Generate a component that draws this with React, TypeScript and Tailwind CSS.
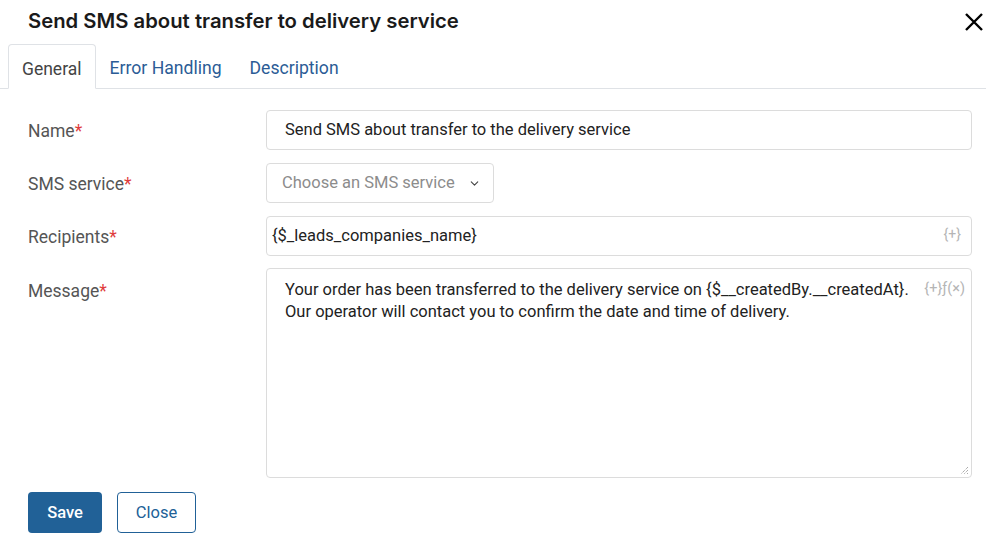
import { ChevronDown } from 'lucide-react';

const font = { fontFamily: 'Roboto, "Liberation Sans", sans-serif' };

function Label({ text }: { text: string }) {
  return (
    <div className="w-[238px] shrink-0 text-[17.5px] text-[#555]">
      {text}
      <span className="text-[#e03c3c]">*</span>
    </div>
  );
}

export default function App() {
  return (
    <div className="w-[986px] h-[539px] bg-white overflow-hidden text-[#222]" style={font}>
      <div className="flex items-center justify-between pl-[28px] pr-[2px] h-[42px]">
        <h1 className="text-[20.3px] font-semibold text-[#1a1a1a]" style={{ fontFamily: 'Inter, sans-serif' }}>
          Send SMS about transfer to delivery service
        </h1>
        <svg width="20" height="20" viewBox="0 0 20 20" className="mt-[1px]">
          <path d="M2 2 L18 18 M18 2 L2 18" stroke="#000" strokeWidth="2.4" />
        </svg>
      </div>

      <div className="flex border-b border-[#dfe2e6] pl-[8px] h-[47px] items-end">
        <div className="h-[45px] px-[13px] pt-[5px] flex items-center border border-[#dfe2e6] border-b-white -mb-px rounded-t-[4px] bg-white text-[17.5px] text-[#444]">
          General
        </div>
        <div className="h-[45px] pl-[14px] pr-[14px] pt-[5px] flex items-center text-[17.6px] text-[#2b5c96]">Error Handling</div>
        <div className="h-[45px] px-[14px] pt-[5px] flex items-center text-[17.6px] text-[#2b5c96]">Description</div>
      </div>

      <div className="pl-[28px] pr-[14px] pt-[21px] flex flex-col gap-[13px]">
        <div className="flex">
          <div className="pt-[8px]"><Label text="Name" /></div>
          <div className="flex-1 h-[40px] border border-[#dcdcdc] rounded-[4px] flex items-center pl-[18px] text-[16.5px]">
            Send SMS about transfer to the delivery service
          </div>
        </div>

        <div className="flex">
          <div className="pt-[8px]"><Label text="SMS service" /></div>
          <div className="w-[228px] h-[40px] border border-[#dcdcdc] rounded-[4px] flex items-center pl-[15px] gap-[13px] text-[16.5px] text-[#8c8c8c]">
            Choose an SMS service
            <ChevronDown size={13} strokeWidth={2} className="text-[#444]" />
          </div>
        </div>

        <div className="flex">
          <div className="pt-[8px]"><Label text="Recipients" /></div>
          <div className="flex-1 h-[40px] border border-[#dcdcdc] rounded-[4px] flex items-center justify-between pl-[5px] pr-[10px] text-[16.5px]">
            <span>{'{$_leads_companies_name}'}</span>
            <span className="text-[14px] text-[#b5b5b5] -mt-[4px]">{'{+}'}</span>
          </div>
        </div>

        <div className="flex -mt-[1px]">
          <div className="pt-[10px]"><Label text="Message" /></div>
          <div className="relative flex-1 h-[210px] border border-[#dcdcdc] rounded-[4px] pl-[18px] pr-[60px] pt-[10px] text-[16.5px] leading-[22px]">
            Your order has been transferred to the delivery service on {'{$__createdBy.__createdAt}'}.
            <br />
            Our operator will contact you to confirm the date and time of delivery.
            <span className="absolute right-[6px] top-[9px] text-[14.5px] text-[#b5b5b5]">{'{+}'}ƒ(×)</span>
            <svg className="absolute right-[2px] bottom-[2px]" width="10" height="10" viewBox="0 0 10 10">
              <path d="M9 2 L2 9 M9 5 L5 9 M9 8 L8 9" stroke="#888" strokeWidth="1" strokeDasharray="1 1" />
            </svg>
          </div>
        </div>

        <div className="flex gap-[15px] pt-[1px]">
          <button className="h-[41px] w-[74px] pt-[2px] rounded-[4px] bg-[#216197] text-white text-[16.5px] font-medium">Save</button>
          <button className="h-[41px] w-[79px] pt-[2px] rounded-[4px] border border-[#216197] text-[#216197] text-[16.5px]">Close</button>
        </div>
      </div>
    </div>
  );
}
